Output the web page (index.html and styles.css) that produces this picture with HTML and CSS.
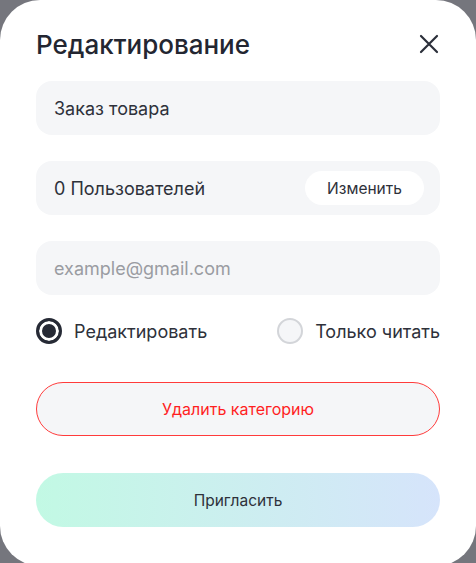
FILE: index.html
```html
<!DOCTYPE html>
<html lang="ru">
<head>
  <meta charset="UTF-8">
  <meta name="viewport" content="width=device-width, initial-scale=1.0">
  <title>Редактирование</title>
  <link rel="stylesheet" href="styles.css">
</head>
<body>
  <div class="modal">
    <div class="modal-header">
      <h1 class="titulo">Редактирование</h1>
      <button class="fechar" aria-label="Закрыть">
        <svg width="20" height="20" viewBox="0 0 20 20">
          <path d="M2 2 L18 18 M18 2 L2 18" stroke="#2b2f3a" stroke-width="2.2" stroke-linecap="round" fill="none"/>
        </svg>
      </button>
    </div>

    <div class="campo">Заказ товара</div>

    <div class="campo campo-usuarios">
      <span>0 Пользователей</span>
      <button class="btn-mudar">Изменить</button>
    </div>

    <div class="campo placeholder">example@gmail.com</div>

    <div class="opcoes">
      <label class="opcao">
        <span class="radio ativo"></span>
        Редактировать
      </label>
      <label class="opcao">
        <span class="radio"></span>
        Только читать
      </label>
    </div>

    <button class="btn-excluir">Удалить категорию</button>

    <button class="btn-convidar">Пригласить</button>
  </div>
</body>
</html>
```

FILE: styles.css
```css
* {
  box-sizing: border-box;
  margin: 0;
  padding: 0;
  font-family: 'Inter', 'Noto Sans', sans-serif;
}

body {
  background-color: #75767d;
  width: 476px;
  height: 563px;
  overflow: hidden;
}

.modal {
  background-color: white;
  border-radius: 40px;
  width: 476px;
  height: 566px;
  padding: 27px 36px 0;
  display: flex;
  flex-direction: column;
}

.modal-header {
  display: flex;
  justify-content: space-between;
  align-items: center;
  height: 34px;
  margin-bottom: 20px;
}

.titulo {
  font-size: 26px;
  font-weight: 500;
  color: #232631;
}

.fechar {
  background: none;
  border: none;
  width: 20px;
  height: 20px;
  margin-right: 1px;
  display: flex;
}

.campo {
  background-color: #f5f6f8;
  border-radius: 16px;
  height: 54px;
  padding: 0 18px;
  display: flex;
  align-items: center;
  font-size: 18px;
  color: #2e313a;
  margin-bottom: 26px;
}

.campo-usuarios {
  justify-content: space-between;
  padding-right: 16px;
}

.btn-mudar {
  background-color: white;
  border: none;
  border-radius: 17px;
  height: 34px;
  width: 119px;
  font-size: 15.5px;
  color: #2e313a;
}

.placeholder {
  color: #9a9ca2;
  margin-bottom: 23px;
}

.opcoes {
  display: flex;
  justify-content: space-between;
  align-items: center;
  height: 26px;
  margin-bottom: 38px;
}

.opcao {
  display: flex;
  align-items: center;
  gap: 12px;
  font-size: 18px;
  color: #2e313a;
}

.radio {
  width: 26px;
  height: 26px;
  border-radius: 50%;
  border: 2px solid #d3d5d9;
  background-color: #f5f6f8;
}

.radio.ativo {
  border: 3px solid #262a35;
  background-color: #262a35;
  box-shadow: inset 0 0 0 3px white;
}

.btn-excluir {
  height: 54px;
  border-radius: 27px;
  border: 1px solid #ff3b3b;
  background-color: #f5f6f8;
  color: #ff1f1f;
  font-size: 16px;
  margin-bottom: 37px;
}

.btn-convidar {
  height: 54px;
  border-radius: 27px;
  border: none;
  background: linear-gradient(90deg, #c2f9e4, #d6e4fb);
  color: #2e313a;
  font-size: 15.5px;
}
```
